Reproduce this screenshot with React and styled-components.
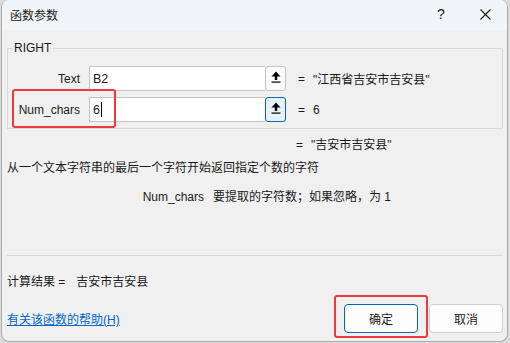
import styled, { createGlobalStyle } from "styled-components";

const GlobalStyle = createGlobalStyle`
    html, body {
        margin: 0;
        padding: 0;
        background: #dcdcdc;
    }
    body {
        font-family: "Liberation Sans", "Noto Sans CJK SC", sans-serif;
        font-size: 12px;
        color: #1a1a1a;
    }
`;

const args = [
    { name: "Text", value: "B2", result: "\"江西省吉安市吉安县\"" },
    { name: "Num_chars", value: "6", result: "6", focused: true },
];

const RefIcon = () => (
    <svg width="10" height="12" viewBox="0 0 10 12">
        <path d="M5 0.5 L9.5 5.5 L6.2 5.5 L6.2 9 L3.8 9 L3.8 5.5 L0.5 5.5 Z" fill="#000" />
        <rect x="0.5" y="10.5" width="9" height="1.2" fill="#000" />
    </svg>
);

const CloseIcon = () => (
    <svg width="11" height="11" viewBox="0 0 11 11">
        <path d="M0.5 0.5 L10.5 10.5 M10.5 0.5 L0.5 10.5" stroke="#1a1a1a" strokeWidth="1.1" />
    </svg>
);

export default function App() {
    return (
        <>
            <GlobalStyle />
            <Window>
                <TitleBar>
                    <Title>函数参数</Title>
                    <TitleButtons>
                        <HelpMark>?</HelpMark>
                        <CloseButton><CloseIcon /></CloseButton>
                    </TitleButtons>
                </TitleBar>
                <Body>
                    <Group>
                        <Legend>RIGHT</Legend>
                        {args.map((arg) => (
                            <ArgRow key={arg.name}>
                                <ArgLabel>{arg.name}</ArgLabel>
                                <InputGroup>
                                    <ArgInput>
                                        {arg.value}
                                        {arg.focused && <Caret />}
                                    </ArgInput>
                                    <RefButton $focused={arg.focused}><RefIcon /></RefButton>
                                </InputGroup>
                                <Equals>=</Equals>
                                <ArgValue>{arg.result}</ArgValue>
                            </ArgRow>
                        ))}
                        <Highlight $left={4} $top={33} $width={104} $height={39} />
                    </Group>
                    <FormulaResult>
                        <Equals>=</Equals>
                        <ArgValue>"吉安市吉安县"</ArgValue>
                    </FormulaResult>
                    <Description>从一个文本字符串的最后一个字符开始返回指定个数的字符</Description>
                    <ParamHelp>
                        <ParamName>Num_chars</ParamName>
                        <span>要提取的字符数；如果忽略，为 1</span>
                    </ParamHelp>
                    <Separator />
                    <CalcResult>
                        <span>计算结果 =</span>
                        <span>吉安市吉安县</span>
                    </CalcResult>
                    <Footer>
                        <HelpLink href="#">有关该函数的帮助(H)</HelpLink>
                        <Buttons>
                            <DialogButton $primary>
                                确定
                                <Highlight $left={-11} $top={-10} $width={94} $height={43} />
                            </DialogButton>
                            <DialogButton>取消</DialogButton>
                        </Buttons>
                    </Footer>
                </Body>
            </Window>
        </>
    );
}

const Window = styled.div`
    box-sizing: border-box;
    width: 507px;
    height: 342px;
    margin-left: 1px;
    border: 1px solid #a9a9a9;
    border-top: none;
    border-radius: 8px;
    overflow: hidden;
    background: #f0f0f0;
    display: flex;
    flex-direction: column;
`;

const TitleBar = styled.div`
    height: 30px;
    flex: none;
    display: flex;
    align-items: center;
    justify-content: space-between;
    background: #f2f5f8;
    padding-left: 8px;
`;

const Title = styled.div`
    font-size: 12px;
    margin-top: -2px;
`;

const TitleButtons = styled.div`
    display: flex;
    align-items: center;
    height: 100%;
`;

const HelpMark = styled.div`
    width: 40px;
    text-align: center;
    font-size: 14px;
    margin-top: -2px;
`;

const CloseButton = styled.div`
    width: 44px;
    display: flex;
    justify-content: center;
    margin-top: -2px;
    margin-left: 2px;
`;

const Body = styled.div`
    flex: 1;
    display: flex;
    flex-direction: column;
    padding: 0 4px 0 5px;
`;

const Group = styled.fieldset`
    position: relative;
    margin: 10px 0 0 0;
    padding: 10px 0 6px 0;
    border: 1px solid #dadada;
    display: flex;
    flex-direction: column;
    gap: 6px;
`;

const Legend = styled.legend`
    margin-left: 5px;
    padding: 0 1px;
    line-height: 16px;
    font-size: 12px;
`;

const ArgRow = styled.div`
    display: flex;
    align-items: center;
    height: 25px;
`;

const ArgLabel = styled.div`
    width: 72px;
    text-align: right;
    margin-right: 9px;
`;

const InputGroup = styled.div`
    display: flex;
    height: 25px;
`;

const ArgInput = styled.div`
    box-sizing: border-box;
    width: 176px;
    height: 25px;
    background: #fff;
    border: 1px solid #c4c4c4;
    border-right: none;
    padding-left: 3px;
    display: flex;
    align-items: center;
    font-size: 12.5px;
`;

const Caret = styled.span`
    display: inline-block;
    width: 1px;
    height: 15px;
    background: #000;
    margin-left: 1px;
`;

const RefButton = styled.div`
    box-sizing: border-box;
    width: 21px;
    height: 25px;
    border: 1px solid ${(p) => (p.$focused ? "#0067c0" : "#c4c4c4")};
    border-radius: 3px;
    background: ${(p) => (p.$focused ? "#e8f1fa" : "#fbfbfb")};
    display: flex;
    align-items: center;
    justify-content: center;
    padding-bottom: 3px;
`;

const Equals = styled.span`
    margin-left: 12px;
    width: 7px;
`;

const ArgValue = styled.span`
    margin-left: 8px;
`;

const Highlight = styled.div`
    position: absolute;
    left: ${(p) => p.$left}px;
    top: ${(p) => p.$top}px;
    width: ${(p) => p.$width}px;
    height: ${(p) => p.$height}px;
    box-sizing: border-box;
    border: 2px solid #ec3a3f;
    border-radius: 3px;
    pointer-events: none;
`;

const FormulaResult = styled.div`
    display: flex;
    line-height: 16px;
    margin-top: 8px;
    padding-left: 277px;
`;

const Description = styled.div`
    line-height: 16px;
    margin-top: 7px;
`;

const ParamHelp = styled.div`
    display: flex;
    gap: 9px;
    line-height: 16px;
    margin-top: 13px;
`;

const ParamName = styled.span`
    width: 197px;
    text-align: right;
`;

const Separator = styled.div`
    height: 1px;
    background: #d9d9d9;
    margin-top: 50px;
`;

const CalcResult = styled.div`
    display: flex;
    gap: 11px;
    line-height: 16px;
    margin-top: 18px;
`;

const Footer = styled.div`
    display: flex;
    align-items: center;
    justify-content: space-between;
    margin-top: 14px;
`;

const HelpLink = styled.a`
    color: #0066cc;
    text-decoration: underline;
`;

const Buttons = styled.div`
    display: flex;
    gap: 11px;
`;

const DialogButton = styled.div`
    position: relative;
    box-sizing: border-box;
    width: 74px;
    height: 29px;
    display: flex;
    align-items: center;
    justify-content: center;
    background: #fdfdfd;
    border: 1px solid ${(p) => (p.$primary ? "#0067c0" : "#d0d0d0")};
    border-radius: 4px;
`;
